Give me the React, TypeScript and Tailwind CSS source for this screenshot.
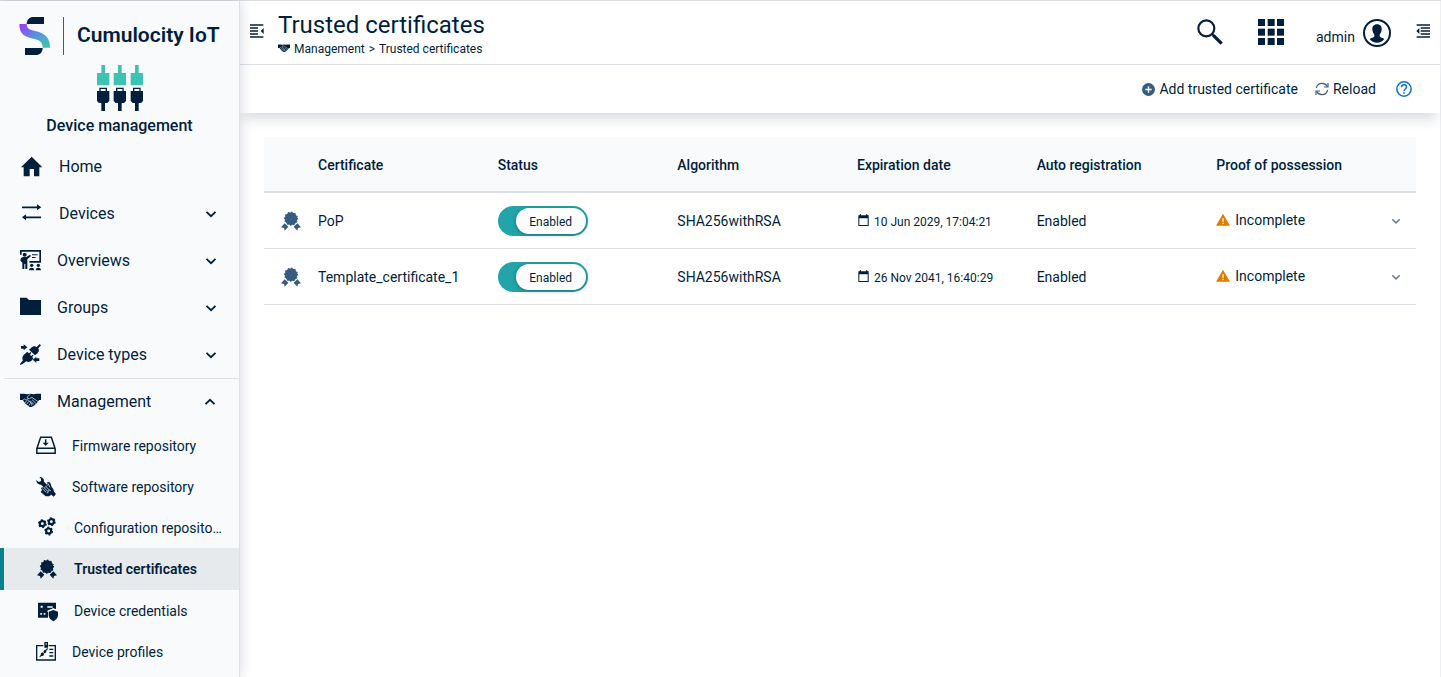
import { useState } from "react";
import type { ReactNode } from "react";

function HomeIcon() {
  return (
    <svg viewBox="0 0 69 69" className="size-[23px] shrink-0" fill="currentColor" aria-hidden="true">
      <path d="M35 5 67 37H58V64H42V42H29V64H11V37H3Z" />
    </svg>
  );
}

function DevicesIcon() {
  return (
    <svg viewBox="0 0 69 69" className="size-[23px] shrink-0" fill="currentColor" aria-hidden="true">
      <path d="M6 13.500H51V7L64 16 51 25V18.500H6ZM63 43.500H18V37L6 46 18 55V48.500H63Z" />
    </svg>
  );
}

function OverviewsIcon() {
  return (
    <svg viewBox="0 0 63 63" className="size-[21px] shrink-0" fill="currentColor" aria-hidden="true">
      <path d="M0 0H63V38H28V33H58V5H5V14H0Z" />
      <circle cx="14" cy="14" r="6" />
      <path d="M3 24 9 21H19L30 14 33 18 22 28V57H16V42H13V57H7V38L1 32Z" />
      <path d="M36 13H53V16H36ZM36 21H47V24H36Z" />
      <circle cx="35" cy="46" r="5" />
      <circle cx="55" cy="46" r="5" />
      <path d="M27 61C27 51 43 51 43 61ZM47 61C47 51 63 51 63 61Z" />
    </svg>
  );
}

function FolderIcon() {
  return (
    <svg viewBox="0 0 63 63" className="size-[21px] shrink-0" fill="currentColor" aria-hidden="true">
      <path d="M0 2H20L27 9H63V54H0Z" />
    </svg>
  );
}

function DeviceTypesIcon() {
  return (
    <svg viewBox="0 0 63 63" className="size-[21px] shrink-0" fill="currentColor" aria-hidden="true">
      <path d="M3 6H11V1L22 10 11 19V14H3ZM58 43H49V38L38 47 49 56V51H58Z" />
      <path d="M59 0 63 4 55 13C59 20 56 25 51 29L45 34 27 17 33 12C38 7 44 5 50 9Z" />
      <path d="M21 23 27 28 31 24 34 27 30 32 34 36 38 32 41 35 36 39 40 42C36 52 26 57 19 52L9 59 1 63 0 60 9 49C4 41 10 32 18 27Z" />
    </svg>
  );
}

function HandshakeIcon({ className }: { className: string }) {
  return (
    <svg viewBox="0 0 63 42" className={className} aria-hidden="true">
      <path
        fill="currentColor"
        d="M0 2H13L22 4 31 2 41 4 50 2H63V21H57L53 28 48 32 44 37 35 42H29L17 33 8 21H0Z"
      />
      <path
        fill="none"
        stroke="#f8fafc"
        strokeWidth="2"
        d="M9 21 14 18 18 21 23 20 26 25 30 25 32 30 36 32 35 38M31 4 22 11 22 16 28 17 36 13 54 26M36 20 48 31M31 23 42 35M15 30 20 23M20 34 25 27M26 38 31 31"
      />
    </svg>
  );
}

function FirmwareIcon() {
  return (
    <svg viewBox="0 0 60 60" className="size-5 shrink-0" fill="none" stroke="currentColor" strokeWidth="4.500" aria-hidden="true">
      <path d="M2.500 38 14 4H46L57.500 38V52H2.500ZM2.500 37H57.500" />
      <path d="M29 10V24" />
      <path d="M20 20H38L29 30Z" fill="currentColor" stroke="none" />
    </svg>
  );
}

function SoftwareIcon() {
  return (
    <svg viewBox="0 0 60 60" className="size-5 shrink-0" aria-hidden="true">
      <g fill="currentColor">
        <path d="M10 0C18-1 25 5 24 14L34 24 25 33 15 23C7 24 0 17 1 9L8 15 15 12V5Z" />
        <path d="M32 17 38 14 43 18 47 30 52 36 54 44 60 51 53 59 46 53 39 58H29L14 45 18 39 15 33 22 30 25 34 35 25Z" />
      </g>
      <path fill="none" stroke="#f8fafc" strokeWidth="2.200" d="M35 18 42 31M19 35 31 46M23 31 36 43M29 28 40 39 45 42M39 39 34 49" />
    </svg>
  );
}

function Gear({ cx, cy }: { cx: number; cy: number }) {
  return (
    <g fill="none" stroke="currentColor">
      <circle cx={cx} cy={cy} r="7.500" strokeWidth="6.500" />
      <circle cx={cx} cy={cy} r="11" strokeWidth="4.500" strokeDasharray="5.760 5.760" />
    </g>
  );
}

function GearsIcon() {
  return (
    <svg viewBox="0 0 66 66" className="size-[22px] shrink-0" aria-hidden="true">
      <Gear cx={19} cy={20} />
      <Gear cx={46} cy={14} />
      <Gear cx={38} cy={42} />
    </svg>
  );
}

function BadgeIcon() {
  return (
    <svg viewBox="0 0 66 66" className="size-[22px] shrink-0" fill="currentColor" aria-hidden="true">
      <circle cx="33" cy="26" r="19" />
      <circle cx="33" cy="26" r="19" fill="none" stroke="currentColor" strokeWidth="5" strokeDasharray="0 9.950" strokeLinecap="round" />
      <path d="M14 40 25 50 14 62 12 54 3 52ZM52 40 41 50 52 62 54 54 63 52Z" />
    </svg>
  );
}

function CredentialsIcon() {
  return (
    <svg viewBox="0 0 66 66" className="size-[22px] shrink-0" aria-hidden="true">
      <path fill="currentColor" d="M6 8H60V28L52 25 36 32V53H6Z" />
      <path fill="#f8fafc" d="M14 17H20V23H14ZM34 19H50V23H34ZM13 39H18V44H13ZM23 39H28V44H23ZM34 32 52 25 60 29V35H34Z" />
      <path fill="currentColor" d="M52 30 66 35V46C65 56 59 61 52 64 45 61 39 56 38 46V35Z" />
    </svg>
  );
}

function ProfilesIcon() {
  return (
    <svg viewBox="0 0 60 60" className="size-5 shrink-0" aria-hidden="true">
      <path fill="none" stroke="currentColor" strokeWidth="4" d="M22 11H2V54H58V11H38" />
      <path fill="currentColor" fillRule="evenodd" d="M25 0H36V17H25ZM29 4V8H32V4Z" />
      <path fill="currentColor" d="M40 20H52V24H40ZM40 30H52V34H40ZM40 40H52V44H40ZM34 18 36 21 31 26 30 32 25 34 22 30 25 24 29 23ZM20 31 25 36 21 42 16 42 12 46 10 44 14 39 15 34Z" />
    </svg>
  );
}

function Chevron({ up = false, className }: { up?: boolean; className: string }) {
  return (
    <svg viewBox="0 0 12 12" className={className} fill="none" stroke="currentColor" strokeWidth="1.800" aria-hidden="true">
      <path d={up ? "M1.500 8.200 6 3.800l4.500 4.400" : "M1.500 3.800 6 8.200l4.500-4.400"} />
    </svg>
  );
}

function CollapseIcon({ flip = false }: { flip?: boolean }) {
  return (
    <svg viewBox="0 0 42 42" className="size-3.5" fill="currentColor" aria-hidden="true">
      {flip ? (
        <path d="M2 1H42V5H2ZM14 10H42V14H14ZM14 19H42V23H14ZM14 28H42V32H14ZM2 37H42V41H2ZM10 12V30L1 21Z" />
      ) : (
        <path d="M0 1H40V5H0ZM0 10H24V14H0ZM0 19H24V23H0ZM0 28H24V32H0ZM0 37H40V41H0ZM41 12V30L32 21Z" />
      )}
    </svg>
  );
}

function Logo() {
  return (
    <svg viewBox="0 0 93 114" className="h-[38px] w-[31px]" aria-hidden="true">
      <defs>
        <linearGradient id="wave" x1="0" y1="0" x2="1" y2="1">
          <stop offset="0.1" stopColor="#8f47f5" />
          <stop offset="0.5" stopColor="#5b8fdc" />
          <stop offset="0.95" stopColor="#3cc6b2" />
        </linearGradient>
      </defs>
      <path fill="#011f3d" d="M23 21C24 7 31 0 44 0H75V21Z" />
      <path fill="url(#wave)" d="M1 21H23C23 35 32 38 48 42 74 48 93 58 93 92H71C71 75 62 70 46 66 20 60 1 54 1 21Z" />
      <path fill="#011f3d" d="M18 93H71C70 107 63 114 50 114H18Z" />
    </svg>
  );
}

function PlugsIcon() {
  return (
    <svg viewBox="0 0 138 138" className="size-[46px]" aria-hidden="true">
      {[0, 50, 101].map((x) => (
        <g key={x} transform={`translate(${x} 0)`}>
          <path fill="#3cc3b6" d="M13 0H24V24H37V61H0V24H13Z" />
          <path fill="#011f3d" fillRule="evenodd" d="M7 68H30V78H37V108L31 114H24V138H13V114H6L0 108V78H7ZM11 72V78H26V72Z" />
        </g>
      ))}
    </svg>
  );
}

const mainItems: { label: string; icon: ReactNode; expandable: boolean }[] = [
  { label: "Home", icon: <HomeIcon />, expandable: false },
  { label: "Devices", icon: <DevicesIcon />, expandable: true },
  { label: "Overviews", icon: <OverviewsIcon />, expandable: true },
  { label: "Groups", icon: <FolderIcon />, expandable: true },
  { label: "Device types", icon: <DeviceTypesIcon />, expandable: true },
];

const managementItems: { label: string; icon: ReactNode; active?: boolean }[] = [
  { label: "Firmware repository", icon: <FirmwareIcon /> },
  { label: "Software repository", icon: <SoftwareIcon /> },
  { label: "Configuration repository", icon: <GearsIcon /> },
  { label: "Trusted certificates", icon: <BadgeIcon />, active: true },
  { label: "Device credentials", icon: <CredentialsIcon /> },
  { label: "Device profiles", icon: <ProfilesIcon /> },
];

const certificates = [
  { name: "PoP", algorithm: "SHA256withRSA", expires: "10 Jun 2029, 17:04:21" },
  { name: "Template_certificate_1", algorithm: "SHA256withRSA", expires: "26 Nov 2041, 16:40:29" },
];

function Sidebar() {
  return (
    <aside className="relative z-10 flex w-60 shrink-0 flex-col border-r border-[#dde1e6] bg-[#f9fafc] shadow-[0_0_12px_rgba(1,31,61,0.18)]">
      <div className="flex items-center pt-4 pl-[19px]">
        <Logo />
        <span className="ml-[13px] h-[38px] w-px bg-[#385b82]" />
        <span className="ml-[13px] text-[21px] font-semibold whitespace-nowrap">Cumulocity IoT</span>
      </div>
      <div className="flex flex-col items-center pt-2.5 pb-[5px]">
        <PlugsIcon />
        <span className="mt-[3px] text-base leading-6 font-medium">Device management</span>
      </div>
      <nav>
        <ul>
          {mainItems.map((item) => (
            <li key={item.label}>
              <a href="#" className="flex h-[47px] items-center gap-4 pr-[22px] pl-5 text-base">
                {item.icon}
                <span className="grow">{item.label}</span>
                {item.expandable && <Chevron className="size-3" />}
              </a>
            </li>
          ))}
          <li>
            <a href="#" className="ml-1 flex h-[47px] items-center gap-4 border-t border-[#dde1e6] pr-[23px] pl-4 text-base">
              <HandshakeIcon className="mb-1 w-[21px] shrink-0" />
              <span className="grow">Management</span>
              <Chevron up className="size-3" />
            </a>
            <ul>
              {managementItems.map((item) => (
                <li key={item.label}>
                  <a
                    href="#"
                    className={
                      item.active
                        ? "flex h-[42px] items-center gap-4 border-l-4 border-[#07818d] bg-[#e6eaec] pr-4 pl-8 text-sm font-semibold"
                        : "flex h-[41px] items-center gap-4 border-l-4 border-transparent pr-4 pl-8 text-sm"
                    }
                  >
                    {item.icon}
                    <span className="truncate">{item.label}</span>
                  </a>
                </li>
              ))}
            </ul>
          </li>
        </ul>
      </nav>
    </aside>
  );
}

function Header() {
  return (
    <header className="flex h-16 items-center border-b border-[#dde1e6] pr-2.5 pl-2.5">
      <button type="button" aria-label="Toggle navigation" className="mb-1">
        <CollapseIcon />
      </button>
      <div className="ml-3.5 grow pt-px">
        <h1 className="text-2xl leading-8">Trusted certificates</h1>
        <div className="flex items-center gap-1 text-xs leading-4">
          <HandshakeIcon className="mb-0.5 w-3" />
          <a href="#">Management</a>
          <span>&gt;</span>
          <a href="#">Trusted certificates</a>
        </div>
      </div>
      <button type="button" aria-label="Search" className="mb-0.5">
        <svg viewBox="0 0 78 78" className="size-[26px]" fill="none" stroke="currentColor" aria-hidden="true">
          <circle cx="28" cy="28" r="24" strokeWidth="6.500" />
          <path d="M45 45 51 51" strokeWidth="6" />
          <path d="M49 49 74 74" strokeWidth="10" />
        </svg>
      </button>
      <button type="button" aria-label="Applications" className="mb-0.5 ml-[35px]">
        <svg viewBox="0 0 78 78" className="size-[26px]" fill="currentColor" aria-hidden="true">
          {[0, 29, 57].map((y) => [0, 29, 57].map((x) => <rect key={`${x}-${y}`} x={x} y={y} width="21" height="21" />))}
        </svg>
      </button>
      <button type="button" className="ml-8 flex items-center gap-2 text-sm">
        <span className="mt-2">admin</span>
        <svg viewBox="0 0 84 84" className="size-7" aria-hidden="true">
          <circle cx="42" cy="42" r="39" fill="none" stroke="currentColor" strokeWidth="6" />
          <path fill="currentColor" d="M42 16C52 16 57 23 56 32 55 40 52 43 50 47V52C52 57 60 57 64 60 58 68 51 71 42 71S26 68 20 60C24 57 32 57 34 52V47C32 43 29 40 28 32 27 23 32 16 42 16Z" />
        </svg>
      </button>
      <button type="button" aria-label="Toggle side panel" className="mb-1 ml-[25px]">
        <CollapseIcon flip />
      </button>
    </header>
  );
}

function ActionBar() {
  return (
    <div className="flex h-12 items-center justify-end pr-7 text-sm shadow-[0_10px_12px_-4px_rgba(1,31,61,0.16)]">
      <button type="button" className="flex items-center gap-1">
        <svg viewBox="0 0 39 39" className="size-[13px] text-[#385b82]" aria-hidden="true">
          <circle cx="19.500" cy="19.500" r="19.500" fill="currentColor" />
          <path stroke="#fff" strokeWidth="4" d="M19.500 10V29M10 19.500H29" />
        </svg>
        Add trusted certificate
      </button>
      <button type="button" className="ml-[17px] flex items-center gap-1">
        <svg viewBox="0 0 42 42" className="size-3.5 text-[#385b82]" fill="none" stroke="currentColor" strokeWidth="3.500" aria-hidden="true">
          <path d="M4 18C6 9 13 4 21 4 28 4 34 8 37 13M38 24C36 33 29 38 21 38 14 38 8 34 5 29" />
          <path d="M39 3V15H27M3 39V27H15" />
        </svg>
        Reload
      </button>
      <button type="button" aria-label="Help" className="ml-5 text-[#0b70d4]">
        <svg viewBox="0 0 48 48" className="size-4" fill="none" stroke="currentColor" strokeWidth="4.500" aria-hidden="true">
          <circle cx="24" cy="24" r="21.500" />
          <path d="M16.500 19C16.500 14 20 11.500 24 11.500S31.500 14 31.500 18C31.500 23 24 23.500 24 30M24 33.500V38" />
        </svg>
      </button>
    </div>
  );
}

function StatusSwitch({ name }: { name: string }) {
  const [on, setOn] = useState(true);
  return (
    <label
      className={
        on
          ? "relative flex h-[30px] w-[90px] cursor-pointer justify-end rounded-full bg-[#22a5a8] p-0.5"
          : "relative flex h-[30px] w-[90px] cursor-pointer justify-start rounded-full bg-[#8b98a8] p-0.5"
      }
    >
      <input
        type="checkbox"
        className="sr-only"
        aria-label={`${name} status`}
        checked={on}
        onChange={(event) => setOn(event.target.checked)}
      />
      <span className="flex w-[70px] items-center justify-center rounded-full bg-white pt-0.5 text-xs shadow-[0_1px_4px_rgba(1,31,61,0.35)]">
        {on ? "Enabled" : "Disabled"}
      </span>
    </label>
  );
}

function CertificateTable() {
  return (
    <table className="w-full table-fixed border-separate border-spacing-0 text-left text-sm">
      <colgroup>
        <col className="w-[46px]" />
        <col />
        <col />
        <col />
        <col />
        <col />
        <col />
        <col className="w-7" />
      </colgroup>
      <thead>
        <tr className="h-14 bg-[#f9fafc] *:border-b-2 *:border-[#dde1e6] *:px-2 *:pt-0.5 *:font-medium">
          <td />
          <th scope="col">Certificate</th>
          <th scope="col">Status</th>
          <th scope="col">Algorithm</th>
          <th scope="col">Expiration date</th>
          <th scope="col">Auto registration</th>
          <th scope="col">Proof of possession</th>
          <td />
        </tr>
      </thead>
      <tbody>
        {certificates.map((cert) => (
          <tr key={cert.name} className="h-14 *:border-b *:border-[#dde1e6]">
            <td className="pl-4 text-[#385b82]">
              <BadgeIcon />
            </td>
            <td className="px-2">{cert.name}</td>
            <td className="px-2">
              <StatusSwitch name={cert.name} />
            </td>
            <td className="px-2">{cert.algorithm}</td>
            <td className="px-2">
              <span className="flex items-center gap-1 text-xs">
                <svg viewBox="0 0 39 39" className="size-[13px]" fill="currentColor" aria-hidden="true">
                  <path fillRule="evenodd" d="M4 4H8V1H12V4H27V1H31V4H35V36H4ZM7 13V33H32V13Z" />
                </svg>
                <span className="pt-0.5">{cert.expires}</span>
              </span>
            </td>
            <td className="px-2">Enabled</td>
            <td className="px-2">
              <span className="mb-0.5 flex items-center gap-[5px]">
                <svg viewBox="0 0 42 42" className="size-3.5" aria-hidden="true">
                  <path fill="#e37a00" d="M21 2 42 38H0Z" />
                  <path fill="#fff" d="M19 16H23V26H19ZM19 29H23V33H19Z" />
                </svg>
                Incomplete
              </span>
            </td>
            <td>
              <button type="button" aria-label={`Show details of ${cert.name}`} className="flex size-4 items-center justify-center text-[#6d8099]">
                <Chevron className="size-2.5" />
              </button>
            </td>
          </tr>
        ))}
      </tbody>
    </table>
  );
}

export default function App() {
  return (
    <div className="flex min-h-screen border-t border-[#dcdee2] bg-white font-[Roboto,sans-serif] text-[#011f3d]">
      <Sidebar />
      <div className="flex min-w-0 grow flex-col border-r border-[#eeeff1]">
        <Header />
        <ActionBar />
        <main className="p-6">
          <CertificateTable />
        </main>
      </div>
    </div>
  );
}
